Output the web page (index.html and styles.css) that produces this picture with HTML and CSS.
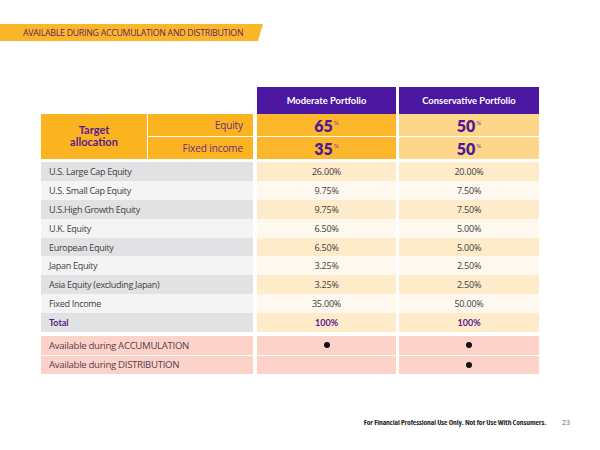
FILE: index.html
```html
<!DOCTYPE html>
<html>
<head>
<meta charset="utf-8">
<link rel="stylesheet" href="styles.css">
</head>
<body>
<div class="banner"><span>AVAILABLE DURING ACCUMULATION AND DISTRIBUTION</span></div>

<div class="table">
  <div class="row head">
    <div class="cell blank"></div>
    <div class="cell blank"></div>
    <div class="cell th c3">Moderate Portfolio</div>
    <div class="cell th c4">Conservative Portfolio</div>
  </div>

  <div class="target">
    <div class="cell tlabel">Target<br>allocation</div>
    <div class="cell tsub c2 r1">Equity</div>
    <div class="cell tval mod c3 r1">65<sup>%</sup></div>
    <div class="cell tval con c4 r1">50<sup>%</sup></div>
    <div class="cell tsub c2 r2">Fixed income</div>
    <div class="cell tval mod c3 r2">35<sup>%</sup></div>
    <div class="cell tval con c4 r2">50<sup>%</sup></div>
  </div>

  <div class="data">
    <div class="row dark"><div class="cell lbl">U.S. Large Cap Equity</div><div class="cell val c3">26.00%</div><div class="cell val c4">20.00%</div></div>
    <div class="row light"><div class="cell lbl">U.S. Small Cap Equity</div><div class="cell val c3">9.75%</div><div class="cell val c4">7.50%</div></div>
    <div class="row dark"><div class="cell lbl">U.S.High Growth Equity</div><div class="cell val c3">9.75%</div><div class="cell val c4">7.50%</div></div>
    <div class="row light"><div class="cell lbl">U.K. Equity</div><div class="cell val c3">6.50%</div><div class="cell val c4">5.00%</div></div>
    <div class="row dark"><div class="cell lbl">European Equity</div><div class="cell val c3">6.50%</div><div class="cell val c4">5.00%</div></div>
    <div class="row light"><div class="cell lbl">Japan Equity</div><div class="cell val c3">3.25%</div><div class="cell val c4">2.50%</div></div>
    <div class="row dark"><div class="cell lbl">Asia Equity (excluding Japan)</div><div class="cell val c3">3.25%</div><div class="cell val c4">2.50%</div></div>
    <div class="row light"><div class="cell lbl">Fixed Income</div><div class="cell val c3">35.00%</div><div class="cell val c4">50.00%</div></div>
    <div class="row dark total"><div class="cell lbl">Total</div><div class="cell val c3">100%</div><div class="cell val c4">100%</div></div>
  </div>

  <div class="avail">
    <div class="row pink"><div class="cell lbl">Available during ACCUMULATION</div><div class="cell val c3"><span class="dot"></span></div><div class="cell val c4"><span class="dot"></span></div></div>
    <div class="row pink"><div class="cell lbl">Available during DISTRIBUTION</div><div class="cell val c3"></div><div class="cell val c4"><span class="dot"></span></div></div>
  </div>
</div>

<footer class="footer">
  <span class="disclaimer">For Financial Professional Use Only. Not for Use With Consumers.</span>
  <span class="page">23</span>
</footer>
</body>
</html>
```

FILE: styles.css
```css
* { box-sizing: border-box; }
html, body { margin: 0; padding: 0; background: #ffffff; }
body {
  width: 600px;
  height: 450px;
  font-family: "Open Sans", "Noto Sans", sans-serif;
  position: relative;
  overflow: hidden;
}

.banner {
  margin-top: 24px;
  width: 263px;
  height: 17px;
  background: #fcb62a;
  clip-path: polygon(0 0, 263px 0, 258px 100%, 0 100%);
  display: flex;
  align-items: center;
  padding-left: 23px;
}
.banner span {
  font-size: 8.8px;
  color: #5e2468;
  letter-spacing: -0.28px;
  white-space: nowrap;
}

.table {
  margin-top: 46px;
  margin-left: 41px;
  width: 498px;
}

.row {
  display: grid;
  grid-template-columns: 106px 106px 143px 143px;
}
.c3 { margin-left: 4px; }
.c4 { margin-left: 3px; }

.head { height: 27px; }
.th {
  background: #4b17a1;
  color: #ffffff;
  font-family: "Lato", "Open Sans", sans-serif;
  font-weight: 700;
  font-size: 9.4px;
  display: flex;
  align-items: center;
  justify-content: center;
}

.target {
  display: grid;
  grid-template-columns: 106px 106px 143px 143px;
  grid-template-rows: 22px 22px;
  row-gap: 1px;
}
.tlabel {
  grid-column: 1;
  grid-row: 1 / span 2;
  background: #fcb320;
  color: #5a1a8c;
  font-family: "Lato", "Open Sans", sans-serif;
  font-weight: 700;
  font-size: 11px;
  line-height: 12px;
  display: flex;
  align-items: center;
  justify-content: center;
  text-align: center;
  padding-bottom: 2px;
}
.tsub {
  grid-column: 2;
  margin-left: 1px;
  background: #fcb320;
  color: #6a2c86;
  font-size: 10px;
  letter-spacing: -0.1px;
  display: flex;
  align-items: center;
  justify-content: flex-end;
  padding-right: 10px;
}
.r1 { grid-row: 1; }
.r2 { grid-row: 2; }
.tval.c3 { grid-column: 3; }
.tval.c4 { grid-column: 4; }
.tval {
  color: #4f1b93;
  font-family: "Lato", "Open Sans", sans-serif;
  font-weight: 800;
  font-size: 16px;
  display: flex;
  align-items: center;
  justify-content: center;
}
.tval sup {
  font-size: 6px;
  font-weight: 700;
  color: #9a5a98;
  align-self: flex-start;
  margin-top: 5px;
  margin-left: 1px;
}
.tval.mod { background: #fcb72c; }
.tval.con { background: #fed68a; }

.data { margin-top: 3px; }
.data .row { height: 18.9px; }
.cell.lbl {
  grid-column: 1 / span 2;
  display: flex;
  align-items: center;
  padding-left: 8px;
  font-size: 9px;
  letter-spacing: -0.3px;
  color: #404040;
}
.cell.val {
  display: flex;
  align-items: center;
  justify-content: center;
  font-size: 9px;
  letter-spacing: -0.2px;
  color: #404040;
}
.dark .lbl { background: #e2e2e4; }
.light .lbl { background: #f4f4f4; }
.dark .val { background: #fdebc9; }
.light .val { background: #fef8ef; }

.total .lbl, .total .val {
  color: #5a1a8c;
  font-weight: 700;
  font-family: "Lato", "Open Sans", sans-serif;
  letter-spacing: 0;
}

.avail { margin-top: 4px; display: flex; flex-direction: column; gap: 1px; }
.avail .row { height: 18.5px; }
.pink .lbl, .pink .val { background: #fdd3c9; }
.pink .lbl { font-size: 9.6px; letter-spacing: -0.3px; color: #584050; }
.dot {
  width: 6px;
  height: 6px;
  border-radius: 50%;
  background: #111111;
}

.footer {
  position: absolute;
  left: 0;
  top: 417px;
  width: 600px;
  display: flex;
  justify-content: flex-end;
  align-items: center;
  padding-right: 30px;
}
.disclaimer {
  font-family: "Open Sans", sans-serif;
  font-stretch: 75%;
  font-weight: 700;
  font-size: 7.6px;
  letter-spacing: -0.1px;
  color: #222222;
}
.page {
  margin-left: 16px;
  font-size: 7px;
  color: #666666;
}
```
